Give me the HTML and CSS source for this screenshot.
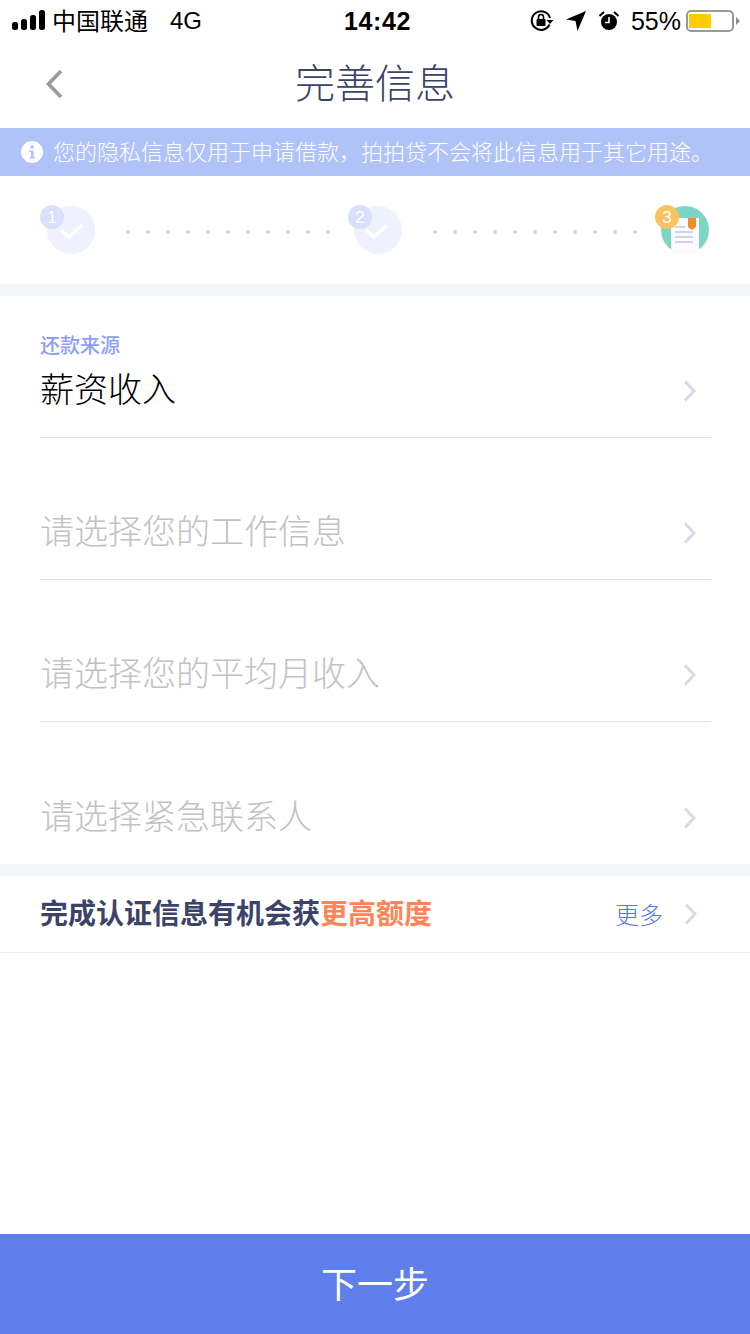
FILE: index.html
```html
<!DOCTYPE html>
<html lang="zh-CN">
<head>
<meta charset="utf-8">
<title>完善信息</title>
<link rel="stylesheet" href="styles.css">
</head>
<body>
<div class="page">
  <div class="status">
    <div class="status-left">
      <svg class="signal" width="34" height="20" viewBox="0 0 34 20"><rect x="0" y="12" width="6" height="8" rx="2.5"/><rect x="9" y="9" width="6" height="11" rx="2.5"/><rect x="18" y="5" width="6" height="15" rx="2.5"/><rect x="27" y="0" width="6" height="20" rx="2.5"/></svg>
      <span class="carrier">中国联通</span>
      <span class="net">4G</span>
    </div>
    <div class="clock">14:42</div>
    <div class="status-right">
      <svg class="ic-lock" width="24" height="22" viewBox="0 0 24 22"><path d="M19.5 14.5A9.3 9.3 0 1 1 20 8" fill="none" stroke="#000" stroke-width="2"/><path d="M16.5 10h7l-3.500 4z"/><rect x="6.500" y="9" width="9" height="7" rx="1"/><path d="M8.500 9V7a2.500 2.500 0 0 1 5 0v2" fill="none" stroke="#000" stroke-width="1.600"/></svg>
      <svg class="ic-loc" width="20" height="20" viewBox="0 0 20 20"><path d="M20 0 0 8.500l9.500 1.500 2 10z"/></svg>
      <svg class="ic-alarm" width="20" height="20" viewBox="0 0 20 20"><circle cx="10" cy="11" r="8"/><path d="M10 6v5.500H6" fill="none" stroke="#fff" stroke-width="1.600"/><path d="M.5 5 5 1M19.500 5 15 1" stroke="#000" stroke-width="2" fill="none"/></svg>
      <span class="pct">55%</span>
      <div class="battery"><div class="battery-fill"></div></div>
      <div class="battery-tip"></div>
    </div>
  </div>

  <div class="nav">
    <svg class="back" width="20" height="30" viewBox="0 0 20 30"><path d="M16 2 3.500 15 16 28" fill="none" stroke="#999" stroke-width="3.600"/></svg>
    <h1 class="title">完善信息</h1>
  </div>

  <div class="notice">
    <svg class="info" width="22" height="22" viewBox="0 0 22 22"><circle cx="11" cy="11" r="11" fill="#fff"/><rect x="9.500" y="4.500" width="3.200" height="3" fill="#b0c3f8"/><path d="M8.500 9.500h4v6.500h1.500v1.500H8.500V16H10v-5H8.500z" fill="#b0c3f8"/></svg>
    <span class="notice-text">您的隐私信息仅用于申请借款，拍拍贷不会将此信息用于其它用途。</span>
  </div>

  <div class="steps">
    <div class="step">
      <svg width="56" height="50" viewBox="0 0 56 50"><circle cx="32" cy="26" r="24" fill="#eff2fe"/><path d="M22 26l8 7 13-12" fill="none" stroke="#fff" stroke-width="3.500"/><circle cx="13" cy="13" r="12" fill="#d9e0fa"/><text class="step-num" x="13" y="19" text-anchor="middle">1</text></svg>
    </div>
    <div class="dots"><i></i><i></i><i></i><i></i><i></i><i></i><i></i><i></i><i></i><i></i><i></i></div>
    <div class="step step-mid">
      <svg width="56" height="50" viewBox="0 0 56 50"><circle cx="30" cy="26" r="24" fill="#eff2fe"/><path d="M18 26l8 7 13-12" fill="none" stroke="#fff" stroke-width="3.500"/><circle cx="12" cy="13" r="12" fill="#d9e0fa"/><text class="step-num" x="12" y="19" text-anchor="middle">2</text></svg>
    </div>
    <div class="dots"><i></i><i></i><i></i><i></i><i></i><i></i><i></i><i></i><i></i><i></i><i></i></div>
    <div class="step">
      <svg width="56" height="50" viewBox="0 0 56 50"><circle cx="30" cy="26" r="24" fill="#7cd6c6"/><path d="M16 14h28v31a5 5 0 0 1-5 5H21a5 5 0 0 1-5-5z" fill="#fbfbfe"/><path d="M33 14h8v9l-4 3-4-3z" fill="#f58a2c"/><path d="M20 28h18M20 33h18M20 38h18M20 23h10" stroke="#cfd3e4" stroke-width="1.800"/><circle cx="12" cy="13" r="12" fill="#fbc25f"/><text class="step-num" x="12" y="19" text-anchor="middle">3</text></svg>
    </div>
  </div>

  <div class="divider"></div>

  <div class="form">
    <div class="row">
      <div class="row-text">
        <div class="label">还款来源</div>
        <div class="value">薪资收入</div>
      </div>
      <svg class="chev" width="14" height="22" viewBox="0 0 14 22"><path d="M2 1.500 11 11l-9 9.500" fill="none" stroke="#d5dce8" stroke-width="3"/></svg>
    </div>
    <div class="row">
      <div class="row-text"><div class="placeholder">请选择您的工作信息</div></div>
      <svg class="chev" width="14" height="22" viewBox="0 0 14 22"><path d="M2 1.500 11 11l-9 9.500" fill="none" stroke="#d5dce8" stroke-width="3"/></svg>
    </div>
    <div class="row">
      <div class="row-text"><div class="placeholder">请选择您的平均月收入</div></div>
      <svg class="chev" width="14" height="22" viewBox="0 0 14 22"><path d="M2 1.500 11 11l-9 9.500" fill="none" stroke="#d5dce8" stroke-width="3"/></svg>
    </div>
    <div class="row row-last">
      <div class="row-text"><div class="placeholder">请选择紧急联系人</div></div>
      <svg class="chev" width="14" height="22" viewBox="0 0 14 22"><path d="M2 1.500 11 11l-9 9.500" fill="none" stroke="#d5dce8" stroke-width="3"/></svg>
    </div>
  </div>

  <div class="divider"></div>

  <div class="more">
    <div class="more-text">完成认证信息有机会获<em>更高额度</em></div>
    <span class="more-link">更多</span>
    <svg class="chev" width="14" height="22" viewBox="0 0 14 22"><path d="M2 1.500 11 11l-9 9.500" fill="none" stroke="#d5dce8" stroke-width="3"/></svg>
  </div>

  <div class="spacer"></div>
  <button class="next" type="button">下一步</button>
</div>
</body>
</html>
```

FILE: styles.css
```css
* { box-sizing: border-box; margin: 0; padding: 0; }
html, body { background: #fff; }
body { font-family: "Noto Sans CJK SC", "Liberation Sans", sans-serif; font-weight: 300; }
.page { width: 750px; height: 1334px; display: flex; flex-direction: column; overflow: hidden; background: #fff; }

.status { height: 40px; display: flex; align-items: center; justify-content: space-between; position: relative; color: #000; padding: 2px 10px 0 12px; }
.status-left { display: flex; align-items: center; }
.signal { margin-right: 7px; margin-top: -2px; }
.carrier { font-size: 24px; line-height: 40px; width: 118px; margin-top: -3px; margin-left: -1px; font-weight: 400; }
.net { font-family: "Liberation Sans", sans-serif; font-size: 24px; font-weight: 400; }
.clock { position: absolute; left: 344px; top: 1px; font-family: "Liberation Sans", sans-serif; font-size: 25px; font-weight: 700; line-height: 40px; letter-spacing: .6px; }
.status-right { display: flex; align-items: center; }
.ic-lock { margin-right: 12px; }
.ic-loc { margin-right: 13px; }
.ic-alarm { margin-right: 12px; }
.pct { font-family: "Liberation Sans", sans-serif; font-size: 25px; font-weight: 400; margin-right: 5px; }
.battery { width: 48px; height: 22px; border: 2px solid #999; border-radius: 5px; padding: 2px 1px; }
.battery-fill { width: 22px; height: 100%; background: #fc0; }
.battery-tip { width: 4px; height: 8px; background: #888; margin: 0 0 0 2px; clip-path: polygon(0 0, 100% 50%, 0 100%); }

.nav { height: 88px; display: flex; align-items: center; justify-content: center; position: relative; }
.back { position: absolute; left: 45px; top: 29px; }
.title { font-size: 40px; font-weight: 300; color: #3b4368; line-height: 82px; margin-bottom: 6px; }

.notice { height: 48px; background: #b0c3f8; display: flex; align-items: center; padding-left: 21px; color: #fff; font-size: 22px; }
.info { margin-right: 10px; flex: none; }
.notice-text { margin-top: -4px; }

.steps { height: 108px; display: flex; align-items: flex-start; padding: 28px 0 0 39px; }
.step { width: 56px; height: 50px; flex: none; }
.step-mid { width: 54px; }
.step + .dots { margin-left: 31px; }
.dots { width: 204px; height: 4px; margin-top: 26px; display: flex; justify-content: space-between; margin-right: 18px; }
.dots i { width: 4px; height: 4px; border-radius: 50%; background: #d3d5db; }
.step-num { font-family: "Liberation Sans", sans-serif; font-size: 17px; font-weight: 400; fill: #fff; }
.step svg { display: block; }

.divider { height: 12px; background: #f5f6f8; flex: none; }

.form { padding: 0 39px 0 40px; }
.row { height: 142px; display: flex; align-items: flex-end; border-bottom: 1px solid #e3e3e6; position: relative; }
.row-last { border-bottom: 0; }
.row-text { flex: 1; padding-bottom: 24px; }
.label { font-size: 20px; font-weight: 500; color: #8d9ef8; line-height: 26px; margin-bottom: 2px; }
.value { font-size: 34px; color: #000; line-height: 56px; margin-bottom: -3px; }
.placeholder { font-size: 34px; color: #c2c2c2; line-height: 56px; margin-bottom: -3px; }
.row .chev { margin: 0 14px 35px 0; }

.more { height: 77px; display: flex; align-items: center; border-bottom: 1px solid #f0f0f2; padding: 0 52px 0 40px; }
.more-text { flex: 1; font-size: 28px; font-weight: 700; color: #3b4368; margin-top: -4px; }
.more-text em { font-style: normal; color: #ff8556; }
.more-link { font-size: 24px; color: #5875ee; margin-right: 21px; font-weight: 300; margin-top: -1px; }

.spacer { flex: 1; }
.next { height: 100px; width: 750px; border: 0; background: #5f80ec; color: #fff; font-family: inherit; font-weight: 400; font-size: 36px; flex: none; padding-bottom: 4px; }
```
